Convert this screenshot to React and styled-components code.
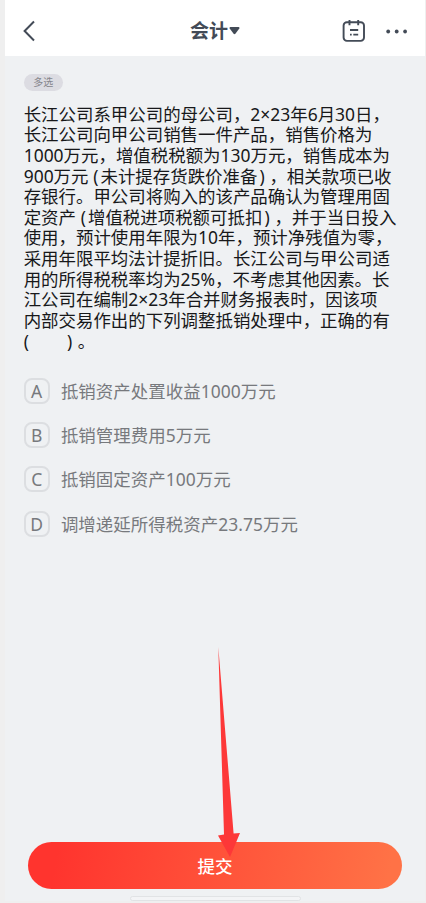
import styled, { createGlobalStyle } from "styled-components";

const questionLines = [
  "长江公司系甲公司的母公司，2×23年6月30日，",
  "长江公司向甲公司销售一件产品，销售价格为",
  "1000万元，增值税税额为130万元，销售成本为",
  "900万元(未计提存货跌价准备)，相关款项已收",
  "存银行。甲公司将购入的该产品确认为管理用固",
  "定资产(增值税进项税额可抵扣)，并于当日投入",
  "使用，预计使用年限为10年，预计净残值为零，",
  "采用年限平均法计提折旧。长江公司与甲公司适",
  "用的所得税税率均为25%，不考虑其他因素。长",
  "江公司在编制2×23年合并财务报表时，因该项",
  "内部交易作出的下列调整抵销处理中，正确的有",
];

const options = [
  { key: "A", text: "抵销资产处置收益1000万元" },
  { key: "B", text: "抵销管理费用5万元" },
  { key: "C", text: "抵销固定资产100万元" },
  { key: "D", text: "调增递延所得税资产23.75万元" },
];

function QuestionLine({ text }) {
  return (
    <Line>
      {text.split(/([()])/).map((part, i) => {
        if (part === "(") return <Paren key={i} $align="right">(</Paren>;
        if (part === ")") return <Paren key={i} $align="left">)</Paren>;
        return part;
      })}
    </Line>
  );
}

export default function App() {
  return (
    <>
      <GlobalStyle />
      <Page>
        <Screen>
          <Header>
            <BackButton aria-label="返回">
              <svg width="14" height="22" viewBox="0 0 14 22" fill="none" stroke="#434b57" strokeWidth="2">
                <path d="M12 1.500 2.600 11 12 20.500" />
              </svg>
            </BackButton>
            <Subject>
              会计
              <svg width="11" height="8" viewBox="0 0 11 8" fill="#434b57">
                <path d="M1.400 0h8.200c.8 0 1.100.8.7 1.400L6.400 6.700c-.5.6-1.300.6-1.800 0L.7 1.400C.3.800.6 0 1.400 0z" />
              </svg>
            </Subject>
            <Actions>
              <svg width="24" height="24" viewBox="0 0 24 24" fill="none" stroke="#434b57" strokeWidth="1.9">
                <rect x="1.600" y="3.300" width="20.400" height="18.600" rx="3.300" />
                <path d="M7.500 1v5.200M16.200 1v5.200M8 11h8.200M11.300 15.600h4.900M8 15.600h1.700" />
              </svg>
              <svg width="22" height="5" viewBox="0 0 22 5" fill="#434b57">
                <circle cx="2.200" cy="2.500" r="1.900" />
                <circle cx="10.700" cy="2.500" r="1.900" />
                <circle cx="19.100" cy="2.500" r="1.900" />
              </svg>
            </Actions>
          </Header>

          <Content>
            <Tag>多选</Tag>
            <Question>
              {questionLines.map((text) => (
                <QuestionLine key={text} text={text} />
              ))}
              <Line>
                <Blank>
                  <span>(</span>
                  <span>)</span>
                </Blank>
                。
              </Line>
            </Question>
            <Options>
              {options.map(({ key, text }) => (
                <Option key={key}>
                  <Letter>{key}</Letter>
                  {text}
                </Option>
              ))}
            </Options>
          </Content>

          <Footer>
            <Submit>提交</Submit>
            <HomeBar />
          </Footer>
        </Screen>

        <Arrow width="24" height="212" viewBox="0 0 24 212" fill="#fd3838">
          <path d="M1.300 0 16.600 186.500 23 186 13 210 1 188.500 7 187.500z" />
        </Arrow>
      </Page>
    </>
  );
}

const GlobalStyle = createGlobalStyle`
  * {
    box-sizing: border-box;
  }

  body {
    margin: 0;
    background: #efefef;
    font-family: "Noto Sans", "Noto Sans CJK SC", sans-serif;
  }
`;

const Page = styled.div`
  position: relative;
  width: 426px;
  height: 903px;
  padding: 0 1px 2px 5px;
  overflow: hidden;
  background: #efefef;
`;

const Screen = styled.main`
  display: flex;
  flex-direction: column;
  height: 100%;
  background: #eff1f3;
`;

const Header = styled.header`
  display: grid;
  grid-template-columns: 1fr auto 1fr;
  align-items: center;
  height: 56px;
  padding: 6px 17px 0 17px;
  background: #fff;
`;

const BackButton = styled.button`
  display: flex;
  width: 24px;
  padding: 0;
  border: 0;
  background: none;
`;

const Subject = styled.h1`
  display: flex;
  align-items: center;
  gap: 1px;
  margin: 0;
  color: #434b57;
  font-size: 19px;
  font-weight: 700;
  line-height: 24px;
`;

const Actions = styled.div`
  display: flex;
  align-items: center;
  justify-content: flex-end;
  gap: 20px;
`;

const Content = styled.section`
  flex: 1;
  padding: 18px 0 0 18.7px;
`;

const Tag = styled.div`
  width: 39px;
  height: 17px;
  border-radius: 9px;
  background: #dcdce2;
  color: #86868c;
  font-size: 10px;
  line-height: 17px;
  text-align: center;
`;

const Question = styled.div`
  margin-top: 12.6px;
  color: #17181a;
  font-size: 17.45px;
  line-height: 20.65px;
`;

const Line = styled.div`
  height: 20.65px;
  white-space: nowrap;
`;

const Paren = styled.span`
  display: inline-block;
  width: 12px;
  padding: 0 2px;
  text-align: ${({ $align }) => $align};
`;

const Blank = styled.span`
  display: inline-flex;
  justify-content: space-between;
  width: 48.5px;
  margin-right: 5.5px;
`;

const Options = styled.div`
  display: flex;
  flex-direction: column;
  gap: 18.3px;
  margin-top: 26.4px;
`;

const Option = styled.div`
  display: flex;
  align-items: center;
  gap: 11.2px;
  height: 26px;
  color: #77797d;
  font-size: 17.45px;
  letter-spacing: 0.05px;
  line-height: 26px;
  white-space: nowrap;
`;

const Letter = styled.span`
  width: 26px;
  height: 26px;
  border: 2px solid #dcdee1;
  border-radius: 8px;
  font-size: 17.5px;
  line-height: 23px;
  text-align: center;
`;

const Footer = styled.footer`
  display: flex;
  flex-direction: column;
  align-items: center;
  height: 59px;
`;

const Submit = styled.button`
  width: 374px;
  height: 47px;
  flex: none;
  margin-top: 0.4px;
  padding: 0;
  border: 0;
  border-radius: 24px;
  background: linear-gradient(100deg, #ff342e 8%, #ff7246 96%);
  color: #fff;
  font-family: inherit;
  font-size: 17.5px;
  font-weight: 500;
`;

const HomeBar = styled.div`
  width: 171px;
  height: 5px;
  margin-top: 6.6px;
  border: 1px solid #e1e3e5;
  border-radius: 3px;
  background: #f3f4f6;
`;

const Arrow = styled.svg`
  position: absolute;
  top: 647px;
  left: 217px;
  pointer-events: none;
`;
